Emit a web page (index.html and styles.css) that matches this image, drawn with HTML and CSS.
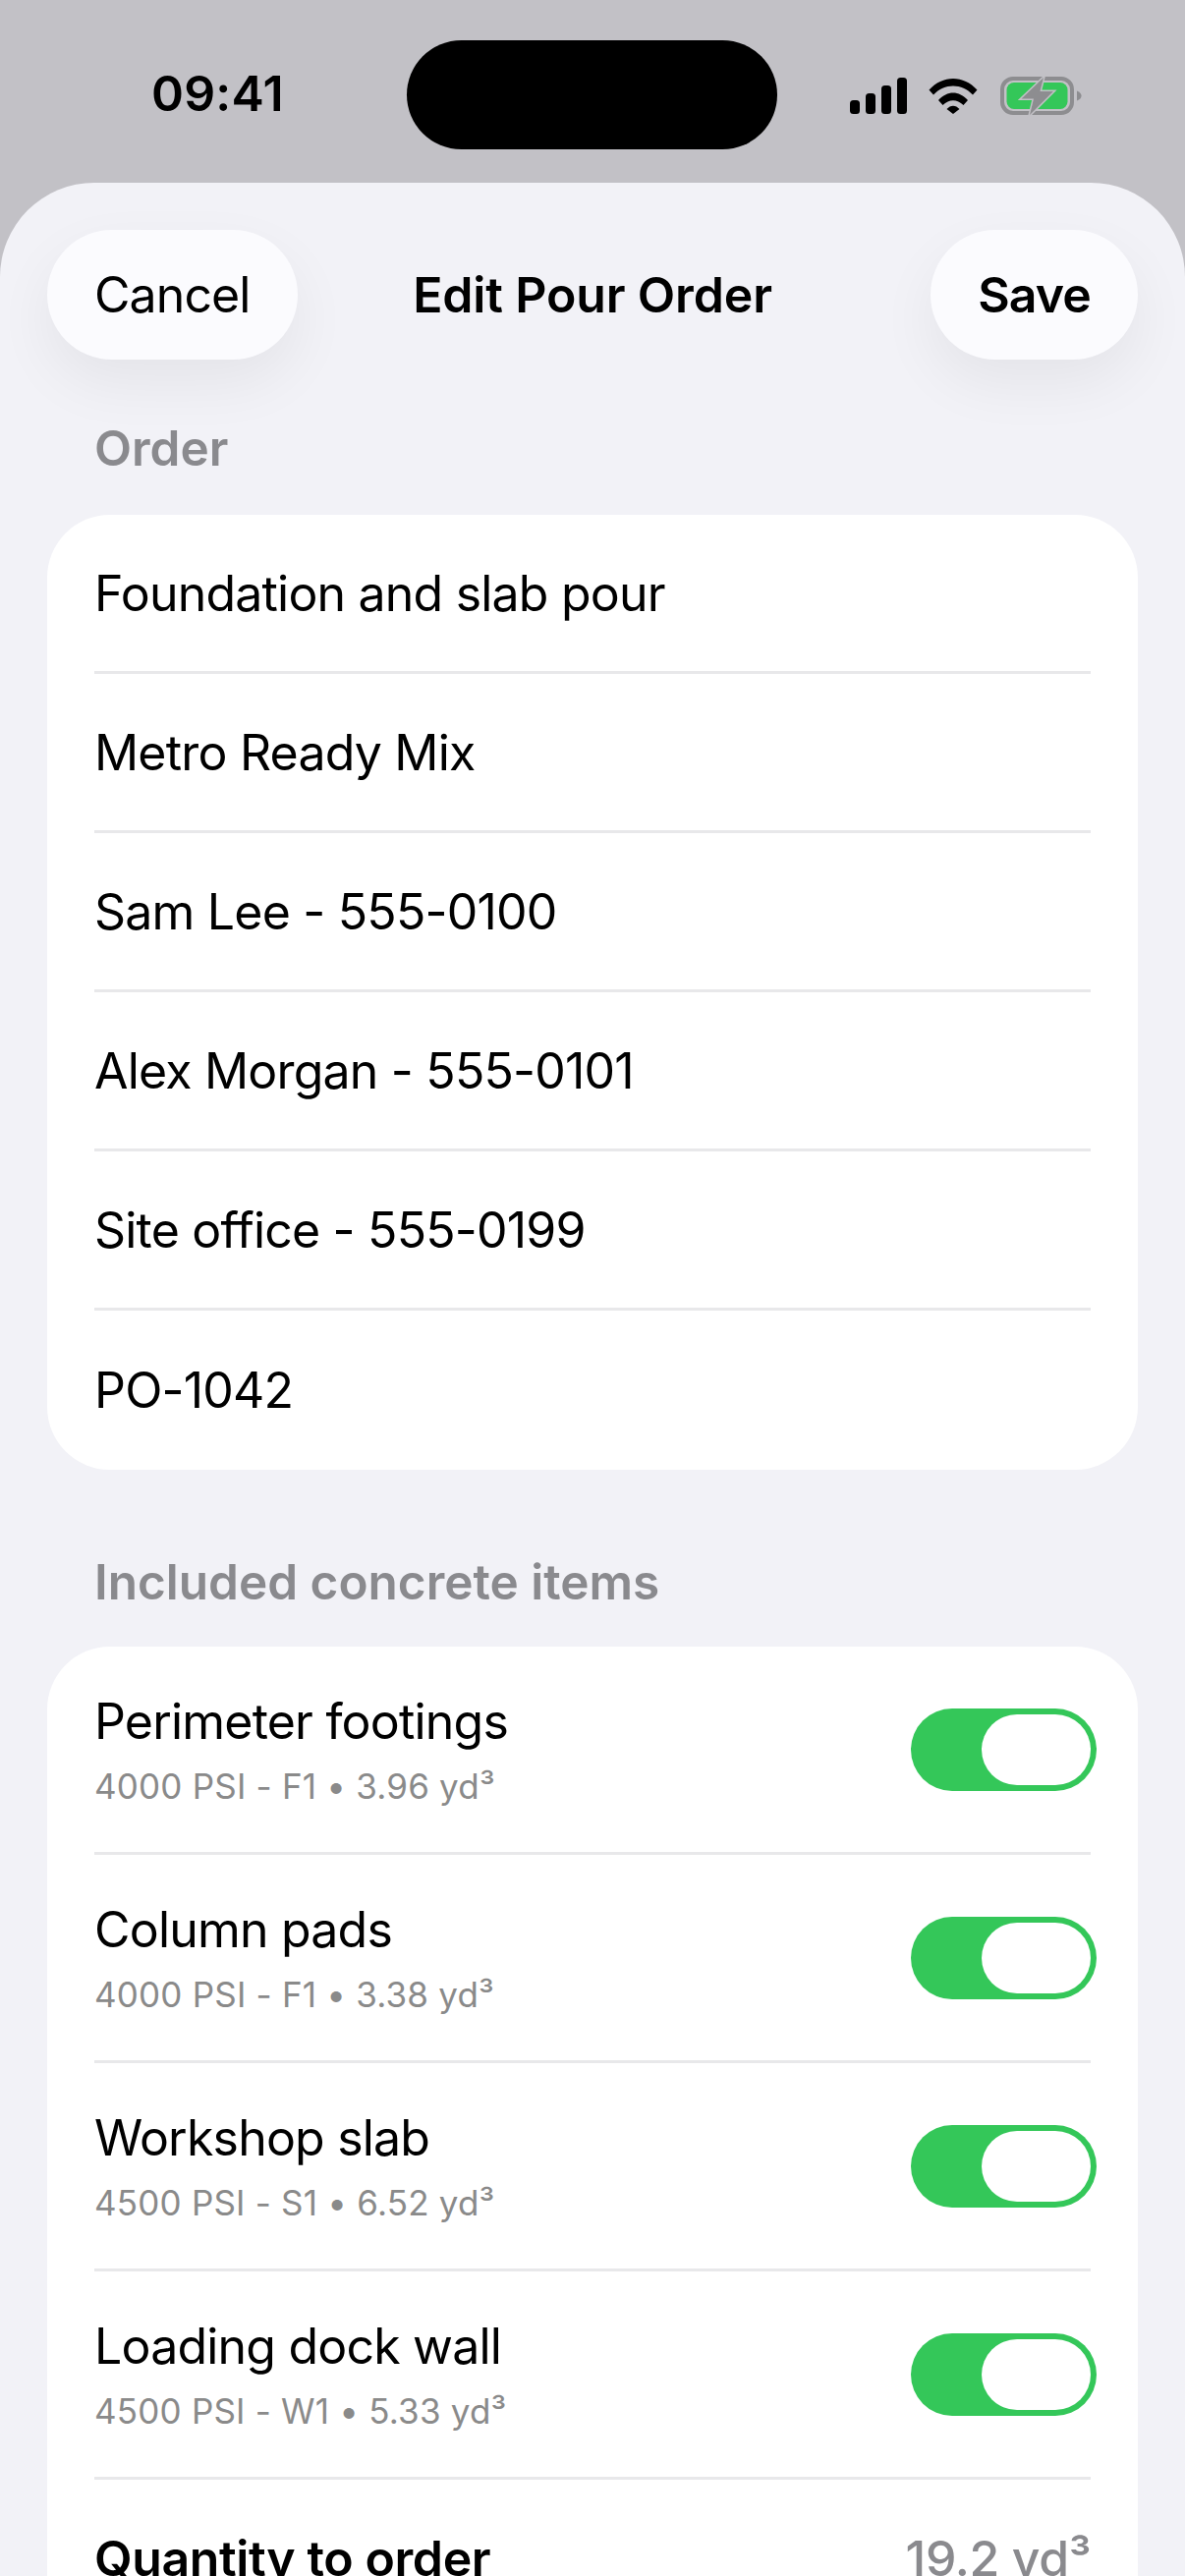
FILE: index.html
```html
<!DOCTYPE html>
<html lang="en">
<head>
  <meta charset="UTF-8" />
  <title>Edit Pour Order</title>
  <link rel="stylesheet" href="styles.css">
</head>
<body>
  <div class="screen">
    <!-- STATUS BAR -->
    <div class="status">
      <span class="time">09:41</span>
      <div class="island"></div>
      <svg class="status-icons" width="236" height="40" viewBox="864 78 236 40">
        <rect x="865" y="102" width="10" height="14" rx="3.5" />
        <rect x="881" y="95" width="10" height="21" rx="3.5" />
        <rect x="897" y="87" width="10" height="29" rx="3.5" />
        <rect x="913" y="79" width="10" height="37" rx="3.5" />
        <path d="M945.5 91.5C959 76 981 76 994.500 91.500L990 96.500C979 84.500 961 84.500 950 96.500Z" />
        <path d="M955 102C964 92 976 92 985 102L980.500 107C974 100.500 966 100.500 959.500 107Z" />
        <path d="M963.500 111C967.500 106.500 972.500 106.500 976.500 111L970 116Z" />
        <rect x="1020" y="80" width="71" height="35" rx="11" fill="none" stroke="#8d8d90" stroke-width="4" />
        <rect x="1024.500" y="84" width="62" height="27" rx="7.500" fill="#34c759" />
        <path d="M1096 92.500C1099 93.500 1100.500 95.500 1100.500 97.500C1100.500 99.500 1099 101.500 1096 102.500Z" fill="#8d8d90" />
        <path class="bolt" d="M1062 79L1039.500 100.500H1052L1048 117L1072 93H1058.500Z" />
      </svg>
    </div>

    <!-- SHEET -->
    <div class="sheet">
      <div class="nav">
        <button class="pill" type="button">Cancel</button>
        <span class="nav-title">Edit Pour Order</span>
        <button class="pill strong" type="button">Save</button>
      </div>

      <h3 class="section-title first">Order</h3>
      <div class="card">
        <div class="row">Foundation and slab pour</div>
        <div class="row">Metro Ready Mix</div>
        <div class="row">Sam Lee - 555-0100</div>
        <div class="row">Alex Morgan - 555-0101</div>
        <div class="row">Site office - 555-0199</div>
        <div class="row">PO-1042</div>
      </div>

      <h3 class="section-title">Included concrete items</h3>
      <div class="card">
        <div class="row item">
          <div>
            <div class="item-name">Perimeter footings</div>
            <small>4000 PSI - F1 • 3.96 yd³</small>
          </div>
          <div class="toggle"><span></span></div>
        </div>
        <div class="row item">
          <div>
            <div class="item-name">Column pads</div>
            <small>4000 PSI - F1 • 3.38 yd³</small>
          </div>
          <div class="toggle"><span></span></div>
        </div>
        <div class="row item">
          <div>
            <div class="item-name">Workshop slab</div>
            <small>4500 PSI - S1 • 6.52 yd³</small>
          </div>
          <div class="toggle"><span></span></div>
        </div>
        <div class="row item">
          <div>
            <div class="item-name">Loading dock wall</div>
            <small>4500 PSI - W1 • 5.33 yd³</small>
          </div>
          <div class="toggle"><span></span></div>
        </div>
        <div class="row total">
          <strong>Quantity to order</strong>
          <span class="total-value">19.2 yd³</span>
        </div>
      </div>
    </div>
  </div>
</body>
</html>
```

FILE: styles.css
```css
html,body{margin:0;padding:0;height:2622px;overflow:hidden}
body{font-family:Inter,"Liberation Sans",sans-serif;background:#c2c1c6;color:#000}
.screen{width:1206px;height:2622px;overflow:hidden}

.status{height:186px;box-sizing:border-box;padding:41px 106px 0 155px;display:flex;align-items:flex-start}
.time{font-size:50px;font-weight:600;line-height:111px;height:111px;width:133px;margin-top:-1px;margin-left:-1px;letter-spacing:.2px}
.island{width:377px;height:111px;background:#000;border-radius:56px;margin-left:127px}
.status-icons{margin-top:37px;margin-left:auto;fill:#000;flex:none;overflow:visible}
.bolt{fill:#8d8d90;stroke:#c2c1c6;stroke-width:3px;paint-order:stroke}

.sheet{height:2436px;background:#f2f2f7;border-radius:96px 96px 0 0;padding:48px 48px 0;box-sizing:border-box}
.nav{display:flex;justify-content:space-between;align-items:center;height:132px;position:relative}
.pill{height:132px;padding:0 48px;border:none;border-radius:66px;background:#fbfbfe;color:#000;font:inherit;font-size:50px;letter-spacing:-.9px;box-shadow:0 24px 60px rgba(0,0,0,.06)}
.pill.strong{font-weight:600;padding:0 48px}
.nav-title{font-size:50px;font-weight:600;letter-spacing:-.15px;position:absolute;left:0;right:0;text-align:center;pointer-events:none}

.section-title{margin:84px 0 36px;font-size:49.500px;font-weight:600;color:#8a8a8e;padding:0 48px;height:60px;line-height:60px}
.section-title.first{margin-top:60px;margin-bottom:38px}

.card{background:#fff;border-radius:64px;padding:0 48px}
.row{height:162px;box-sizing:border-box;border-bottom:3px solid #e8e8ea;display:flex;align-items:center;font-size:50px;letter-spacing:-.8px}
.row:last-child{border-bottom:none}
.item{height:212px;justify-content:space-between}
.item-name{line-height:60px}
.row small{display:block;font-size:35px;color:#8a8a8a;line-height:44px;margin-top:14px;letter-spacing:.2px}
.toggle{width:189px;height:84px;background:#34c759;border-radius:42px;position:relative;margin-right:-6px}
.toggle span{position:absolute;top:6px;right:6px;width:111px;height:72px;background:#fff;border-radius:36px}
.total{justify-content:space-between;height:160px;letter-spacing:-.4px}
.total strong{font-weight:600}
.total-value{color:#8a8a8e;font-weight:500}
```
